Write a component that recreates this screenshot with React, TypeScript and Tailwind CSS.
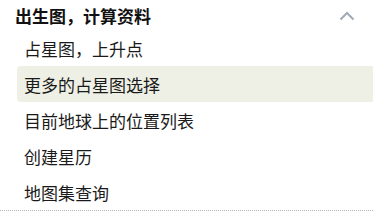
import { useState } from 'react'

const items = [
  '占星图，上升点',
  '更多的占星图选择',
  '目前地球上的位置列表',
  '创建星历',
  '地图集查询',
]

export default function App() {
  const [active] = useState(1)

  return (
    <div
      className="w-[373px] h-[214px] bg-white text-[#1a1a1a] overflow-hidden"
      style={{ fontFamily: '"Noto Sans CJK SC", "Noto Sans", sans-serif' }}
    >
      <div className="border-b border-dotted border-[#b5b5b5]">
        {/* Section header */}
        <div className="flex items-center justify-between h-[28px] pl-[15px] pr-[18px] pt-[2px] mb-[2px]">
          <span className="text-[17px] font-bold leading-none text-[#111]">出生图，计算资料</span>
          <svg width="16" height="10" viewBox="0 0 16 10" fill="none" className="mt-[2px]">
            <path d="M1.5 8.5 L8 2 L14.5 8.5" stroke="#9eabb8" strokeWidth="2" />
          </svg>
        </div>

        {/* Menu items */}
        <ul className="ml-[17px]">
          {items.map((label, i) => (
            <li
              key={label}
              className={`flex items-center h-[36px] pl-[7px] text-[17px] leading-none ${
                i === active ? 'bg-[#eef0e5] rounded-l-[4px]' : ''
              }`}
            >
              {label}
            </li>
          ))}
        </ul>
      </div>
    </div>
  )
}
